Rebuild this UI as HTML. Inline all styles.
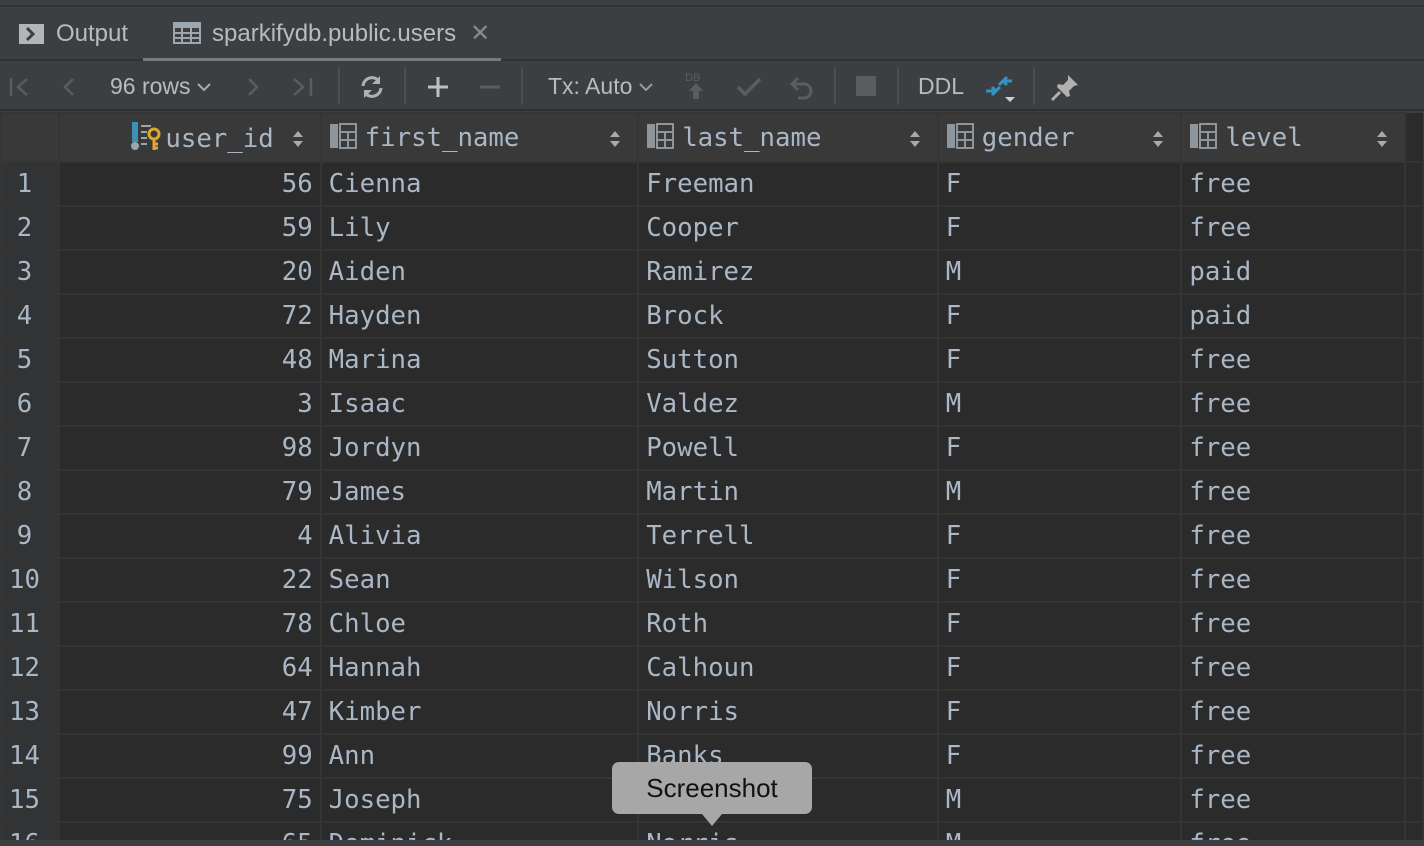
<!DOCTYPE html>
<html><head><meta charset="utf-8"><style>
*{margin:0;padding:0;box-sizing:border-box}
html,body{width:1424px;height:846px;overflow:hidden}
body{background:#3c3f41;font-family:"Liberation Sans",sans-serif;position:relative}
#wrap{position:absolute;left:0;top:0;width:1424px;height:846px;overflow:hidden}
.top{position:absolute;left:0;top:0;width:1424px;height:7px;background:#3c3f41;border-bottom:2px solid #323232}
.tabs{position:absolute;top:9px;left:0;width:1424px;height:52px;background:#3c3f41;border-bottom:2px solid #323232}
.tab{position:absolute;top:0;height:52px;line-height:50px;color:#bbbbbb;font-size:24px}
.uline{position:absolute;left:143px;top:58px;width:358px;height:3px;background:#747a80}
.tb{position:absolute;top:63px;left:0;width:1424px;height:48px;background:#3c3f41;border-bottom:2px solid #2f2f2f}
.tb .t{position:absolute;top:0;line-height:46px;color:#bbbbbb;font-size:23px}
.sep{position:absolute;top:4px;width:2px;height:38px;background:#4b4e50}
table{position:absolute;left:0;top:112px;border-collapse:collapse;table-layout:fixed;font-family:"DejaVu Sans Mono","Liberation Mono",monospace;font-size:25.7px;color:#a9b7c6}
td,th{height:44px;border:2px solid #353535;padding:0 7px;white-space:nowrap;overflow:hidden;font-weight:normal}
th{height:49px;background:#393939;text-align:left;position:relative}
td{background:#2b2b2b}
td.g{background:#313335;text-align:center;padding:0 11px 0 0}
td.n{text-align:right}
th .s{position:absolute;right:16px;top:15px}
.ic{display:inline-block;vertical-align:-3px;margin-right:8px}
.tip{position:absolute;left:612px;top:762px;width:200px;height:52px;background:#a7a7a7;border-radius:7px;color:#111;font-size:26px;text-align:center;line-height:52px}
.tip:after{content:"";position:absolute;left:90px;bottom:-12px;border:10px solid transparent;border-top:12px solid #a7a7a7;border-bottom:0}
.bot{position:absolute;left:0;top:840px;width:1424px;height:6px;background:#3c3f41}
</style></head><body><div id="wrap">
<div class="top"></div>
<div class="tabs">
 <div class="tab" style="left:19px"><svg width="25" height="20" style="vertical-align:-3px;margin-right:12px"><rect width="25" height="20" fill="#b5b5b5"/><path d="M8 4l6 6-6 6" stroke="#3c3f41" stroke-width="3" fill="none"/></svg>Output</div>
 <div class="tab" style="left:173px"><svg width="28" height="22" style="vertical-align:-3px;margin-right:11px"><rect x="1" y="1" width="26" height="20" fill="none" stroke="#9aa7b0" stroke-width="2"/><rect x="1" y="1" width="26" height="5" fill="#9aa7b0"/><path d="M1 11h26M1 16h26M9 6v15M18 6v15" stroke="#9aa7b0" stroke-width="2"/></svg>sparkifydb.public.users<span style="color:#8a8a8a;margin-left:14px">✕</span></div>
</div>
<div class="uline"></div>
<div class="tb">
 <svg style="position:absolute;left:9px;top:13px" width="22" height="22"><path d="M2 2v18M18 3l-9 8 9 8" stroke="#5a5d5f" stroke-width="2.5" fill="none"/></svg>
 <svg style="position:absolute;left:61px;top:13px" width="16" height="22"><path d="M12 3l-8 8 8 8" stroke="#5a5d5f" stroke-width="2.5" fill="none"/></svg>
 <div class="t" style="left:110px">96 rows <svg width="14" height="10" style="vertical-align:2px"><path d="M1 2l6 6 6-6" stroke="#aaa" stroke-width="2" fill="none"/></svg></div>
 <svg style="position:absolute;left:245px;top:13px" width="16" height="22"><path d="M4 3l8 8-8 8" stroke="#5a5d5f" stroke-width="2.5" fill="none"/></svg>
 <svg style="position:absolute;left:291px;top:13px" width="24" height="22"><path d="M3 3l9 8-9 8M20 2v18" stroke="#5a5d5f" stroke-width="2.5" fill="none"/></svg>
 <div class="sep" style="left:338px"></div>
 <svg style="position:absolute;left:358px;top:11px" width="28" height="26"><path d="M5 12a9 9 0 0 1 16-5M23 14a9 9 0 0 1-16 5" stroke="#aeb0b2" stroke-width="3" fill="none"/><path d="M22 2v8h-8zM6 24v-8h8z" fill="#aeb0b2"/></svg>
 <div class="sep" style="left:404px"></div>
 <svg style="position:absolute;left:426px;top:12px" width="24" height="24"><path d="M12 2v20M2 12h20" stroke="#c0c0c0" stroke-width="3"/></svg>
 <svg style="position:absolute;left:478px;top:12px" width="24" height="24"><path d="M2 12h20" stroke="#5a5d5f" stroke-width="3"/></svg>
 <div class="sep" style="left:521px"></div>
 <div class="t" style="left:548px">Tx: Auto <svg width="14" height="10" style="vertical-align:2px"><path d="M1 2l6 6 6-6" stroke="#999" stroke-width="2" fill="none"/></svg></div>
 <svg style="position:absolute;left:684px;top:8px" width="24" height="32"><text x="1" y="10" font-size="11" fill="#5a5d5f" font-family="Liberation Sans">DB</text><path d="M12 12l-7 8h4v8h6v-8h4z" fill="#5a5d5f"/></svg>
 <svg style="position:absolute;left:735px;top:12px" width="28" height="24"><path d="M3 12l7 7 15-15" stroke="#5a5d5f" stroke-width="3.5" fill="none"/></svg>
 <svg style="position:absolute;left:787px;top:11px" width="28" height="26"><path d="M6 10h11a7 7 0 0 1 0 14h-6M11 4l-6 6 6 6" stroke="#5a5d5f" stroke-width="3" fill="none"/></svg>
 <div class="sep" style="left:834px"></div>
 <div style="position:absolute;left:856px;top:13px;width:20px;height:20px;background:#5a5d5f"></div>
 <div class="sep" style="left:897px"></div>
 <div class="t" style="left:918px">DDL</div>
 <svg style="position:absolute;left:985px;top:10px" width="34" height="32"><path d="M27 8h-8M22 4l-4 4 4 4" stroke="#3592c4" stroke-width="3" fill="none"/><path d="M18 8l-4 4" stroke="#3592c4" stroke-width="3"/><path d="M1 18h9M7 14l4 4-4 4" stroke="#3592c4" stroke-width="3" fill="none"/><path d="M11 18l4-4" stroke="#3592c4" stroke-width="3"/><path d="M20 24h10l-5 5z" fill="#d0d0d0"/></svg>
 <div class="sep" style="left:1033px"></div>
 <svg style="position:absolute;left:1050px;top:10px" width="32" height="30"><path d="M18 2l10 10-4 1-5 5 1 5-3 1-10-10 1-3 5 1 5-5z" fill="#b0b0b0"/><path d="M10 19l-8 8" stroke="#b0b0b0" stroke-width="3"/></svg>
</div>
<table>
<colgroup><col style="width:58px"><col style="width:262px"><col style="width:318px"><col style="width:300px"><col style="width:244px"><col style="width:224px"><col style="width:18px"></colgroup>
<tr><th></th>
<th style="text-align:right;padding-right:46px"><svg class="ic" width="32" height="28" style="margin-right:4px"><rect x="3" y="0" width="6" height="20" fill="#3c8fb5"/><circle cx="6" cy="24" r="4" fill="#9aa7b0"/><path d="M12 4h10M12 10h6M12 16h6M12 22h6" stroke="#9aa7b0" stroke-width="2"/><circle cx="25" cy="12" r="5" fill="none" stroke="#e0a82e" stroke-width="3"/><path d="M25 17v11M25 22h4M25 26h4" stroke="#e0a82e" stroke-width="3"/></svg>user_id<svg class="s" width="12" height="20"><path d="M6 2l5 6H1zM6 18l5-6H1z" fill="#aaa"/></svg></th>
<th><svg class="ic" width="28" height="26"><rect x="1" y="1" width="8" height="24" fill="#8d969c"/><rect x="11" y="1" width="16" height="24" fill="none" stroke="#8d969c" stroke-width="2"/><path d="M11 9h16M11 17h16M19 9v16" stroke="#8d969c" stroke-width="2"/></svg>first_name<svg class="s" width="12" height="20"><path d="M6 2l5 6H1zM6 18l5-6H1z" fill="#aaa"/></svg></th>
<th><svg class="ic" width="28" height="26"><rect x="1" y="1" width="8" height="24" fill="#8d969c"/><rect x="11" y="1" width="16" height="24" fill="none" stroke="#8d969c" stroke-width="2"/><path d="M11 9h16M11 17h16M19 9v16" stroke="#8d969c" stroke-width="2"/></svg>last_name<svg class="s" width="12" height="20"><path d="M6 2l5 6H1zM6 18l5-6H1z" fill="#aaa"/></svg></th>
<th><svg class="ic" width="28" height="26"><rect x="1" y="1" width="8" height="24" fill="#8d969c"/><rect x="11" y="1" width="16" height="24" fill="none" stroke="#8d969c" stroke-width="2"/><path d="M11 9h16M11 17h16M19 9v16" stroke="#8d969c" stroke-width="2"/></svg>gender<svg class="s" width="12" height="20"><path d="M6 2l5 6H1zM6 18l5-6H1z" fill="#aaa"/></svg></th>
<th><svg class="ic" width="28" height="26"><rect x="1" y="1" width="8" height="24" fill="#8d969c"/><rect x="11" y="1" width="16" height="24" fill="none" stroke="#8d969c" stroke-width="2"/><path d="M11 9h16M11 17h16M19 9v16" stroke="#8d969c" stroke-width="2"/></svg>level<svg class="s" width="12" height="20"><path d="M6 2l5 6H1zM6 18l5-6H1z" fill="#aaa"/></svg></th>
<th style="background:#2b2b2b;border:none"></th></tr>
<tr><td class="g">1</td><td class="n">56</td><td>Cienna</td><td>Freeman</td><td>F</td><td>free</td><td></td></tr>
<tr><td class="g">2</td><td class="n">59</td><td>Lily</td><td>Cooper</td><td>F</td><td>free</td><td></td></tr>
<tr><td class="g">3</td><td class="n">20</td><td>Aiden</td><td>Ramirez</td><td>M</td><td>paid</td><td></td></tr>
<tr><td class="g">4</td><td class="n">72</td><td>Hayden</td><td>Brock</td><td>F</td><td>paid</td><td></td></tr>
<tr><td class="g">5</td><td class="n">48</td><td>Marina</td><td>Sutton</td><td>F</td><td>free</td><td></td></tr>
<tr><td class="g">6</td><td class="n">3</td><td>Isaac</td><td>Valdez</td><td>M</td><td>free</td><td></td></tr>
<tr><td class="g">7</td><td class="n">98</td><td>Jordyn</td><td>Powell</td><td>F</td><td>free</td><td></td></tr>
<tr><td class="g">8</td><td class="n">79</td><td>James</td><td>Martin</td><td>M</td><td>free</td><td></td></tr>
<tr><td class="g">9</td><td class="n">4</td><td>Alivia</td><td>Terrell</td><td>F</td><td>free</td><td></td></tr>
<tr><td class="g">10</td><td class="n">22</td><td>Sean</td><td>Wilson</td><td>F</td><td>free</td><td></td></tr>
<tr><td class="g">11</td><td class="n">78</td><td>Chloe</td><td>Roth</td><td>F</td><td>free</td><td></td></tr>
<tr><td class="g">12</td><td class="n">64</td><td>Hannah</td><td>Calhoun</td><td>F</td><td>free</td><td></td></tr>
<tr><td class="g">13</td><td class="n">47</td><td>Kimber</td><td>Norris</td><td>F</td><td>free</td><td></td></tr>
<tr><td class="g">14</td><td class="n">99</td><td>Ann</td><td>Banks</td><td>F</td><td>free</td><td></td></tr>
<tr><td class="g">15</td><td class="n">75</td><td>Joseph</td><td>Norris</td><td>M</td><td>free</td><td></td></tr>
<tr><td class="g">16</td><td class="n">65</td><td>Dominick</td><td>Norris</td><td>M</td><td>free</td><td></td></tr>
</table>
<div class="tip">Screenshot</div>
<div class="bot"></div>
</div></body></html>
